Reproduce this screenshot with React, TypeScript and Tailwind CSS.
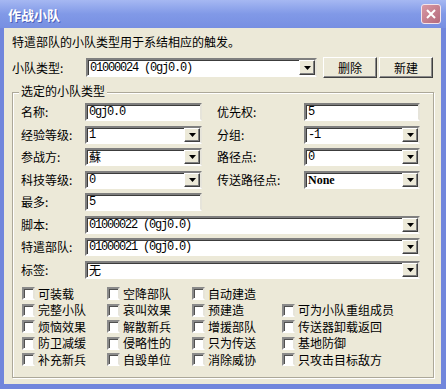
import React from "react";

function Arrow() {
  return (
    <div className="absolute right-0 top-0 bottom-0 w-[16px] bg-[#ece9d8] border border-t-white border-l-white border-b-[#404040] border-r-[#404040] shadow-[inset_-1px_-1px_0_#808080] flex items-center justify-center">
      <svg width="7" height="4" viewBox="0 0 7 4">
        <path d="M0 0 H7 L3.5 4 Z" fill="#000" />
      </svg>
    </div>
  );
}

function Field({
  className,
  value,
  kind = "mono",
  arrow = false,
}: {
  className: string;
  value: string;
  kind?: "mono" | "cjk" | "serif";
  arrow?: boolean;
}) {
  const font =
    kind === "mono"
      ? "font-['Liberation_Mono',monospace] text-[12px] tracking-[-1.2px]"
      : kind === "serif"
      ? "font-['Liberation_Serif',serif] text-[12px] font-semibold"
      : "text-[12px]";
  return (
    <div
      className={`relative bg-white border-2 border-t-[#7f7f7f] border-l-[#7f7f7f] border-b-white border-r-[#e6e4da] shadow-[inset_1px_1px_0_#3c3c3c] flex items-center pl-[2px] ${className}`}
    >
      <span className={`${font} leading-none whitespace-pre`}>{value}</span>
      {arrow && <Arrow />}
    </div>
  );
}

function Btn({ label }: { label: string }) {
  return (
    <div className="w-[54px] h-[21px] bg-[#ece9d8] border border-t-white border-l-white border-b-[#404040] border-r-[#404040] shadow-[inset_-1px_-1px_0_#8a8a8a] flex items-center justify-center text-[12px]">
      {label}
    </div>
  );
}

function Check({ label }: { label: string }) {
  if (!label) return <div />;
  return (
    <div className="flex items-center gap-[3px] h-[16.5px]">
      <div className="w-[13px] h-[13px] shrink-0 bg-white border-2 border-t-[#8a8a8a] border-l-[#8a8a8a] border-b-white border-r-[#e6e4da] shadow-[inset_1px_1px_0_#505050]" />
      <span className="text-[12px] leading-none whitespace-nowrap">{label}</span>
    </div>
  );
}

const checks = [
  "可装载", "空降部队", "自动建造", "",
  "完整小队", "哀叫效果", "预建造", "可为小队重组成员",
  "烦恼效果", "解散新兵", "增援部队", "传送器卸载返回",
  "防卫减缓", "侵略性的", "只为传送", "基地防御",
  "补充新兵", "自毁单位", "消除威协", "只攻击目标敌方",
];

export default function App() {
  return (
    <div className="w-[446px] h-[389px] flex flex-col bg-[#7186dc] font-['Noto_Sans_CJK_SC',sans-serif] text-[12px] text-black overflow-hidden">
      <div className="h-[28px] shrink-0 flex items-center justify-between pl-[8px] pr-[5px] bg-linear-to-b from-[#a6b8f2] via-[#8199e7] to-[#778fe2]">
        <span className="text-white font-bold text-[13px] leading-none [text-shadow:1px_1px_0_#4d5fb8]">作战小队</span>
        <div className="w-[20px] h-[20px] rounded-[3px] border border-[#f3e4ea] bg-linear-to-br from-[#d898a4] to-[#b46a7c] flex items-center justify-center">
          <svg width="10" height="10" viewBox="0 0 10 10">
            <path d="M1 1 L9 9 M9 1 L1 9" stroke="white" strokeWidth="2" />
          </svg>
        </div>
      </div>

      <div className="flex-1 ml-[4px] mr-[5px] mb-[5px] bg-[#ece9d8] flex flex-col pl-[8px] pt-[7px]">
        <div className="h-[14px] leading-[14px] whitespace-nowrap">特遣部队的小队类型用于系结相应的触发。</div>

        <div className="mt-[8px] h-[21px] flex items-center">
          <div className="w-[74px]">小队类型:</div>
          <Field className="w-[231px] h-[19px]" value="01000024 (0gj0.0)" arrow />
          <div className="ml-[6px]">
            <Btn label="删除" />
          </div>
          <div className="ml-[2px]">
            <Btn label="新建" />
          </div>
        </div>

        <div className="relative mt-[14px] w-[422px] h-[286px] border border-[#aca899] shadow-[inset_1px_1px_0_#fff,1px_1px_0_#fff] pl-[8px] pt-[10px]">
          <div className="absolute left-[6px] top-[-9px] px-[2px] bg-[#ece9d8] leading-[14px]">选定的小队类型</div>

          <div className="flex flex-col gap-[4.5px]">
            <div className="flex items-center h-[18px]">
              <div className="w-[64px]">名称:</div>
              <Field className="w-[117px] h-[18px]" value="0gj0.0" />
              <div className="w-[87px] ml-[15px]">优先权:</div>
              <Field className="w-[116px] h-[18px]" value="5" />
            </div>
            <div className="flex items-center h-[18px]">
              <div className="w-[64px]">经验等级:</div>
              <Field className="w-[117px] h-[18px]" value="1" arrow />
              <div className="w-[87px] ml-[15px]">分组:</div>
              <Field className="w-[116px] h-[18px]" value="-1" arrow />
            </div>
            <div className="flex items-center h-[18px]">
              <div className="w-[64px]">参战方:</div>
              <Field className="w-[117px] h-[18px]" value="蘇" kind="cjk" arrow />
              <div className="w-[87px] ml-[15px]">路径点:</div>
              <Field className="w-[116px] h-[18px]" value="0" arrow />
            </div>
            <div className="flex items-center h-[18px]">
              <div className="w-[64px]">科技等级:</div>
              <Field className="w-[117px] h-[18px]" value="0" arrow />
              <div className="w-[87px] ml-[15px]">传送路径点:</div>
              <Field className="w-[116px] h-[18px]" value="None" kind="serif" arrow />
            </div>
            <div className="flex items-center h-[18px]">
              <div className="w-[64px]">最多:</div>
              <Field className="w-[117px] h-[18px]" value="5" />
            </div>
            <div className="flex items-center h-[18px]">
              <div className="w-[64px]">脚本:</div>
              <Field className="w-[335px] h-[18px]" value="01000022 (0gj0.0)" arrow />
            </div>
            <div className="flex items-center h-[18px]">
              <div className="w-[64px]">特遣部队:</div>
              <Field className="w-[335px] h-[18px]" value="01000021 (0gj0.0)" arrow />
            </div>
            <div className="flex items-center h-[18px]">
              <div className="w-[64px]">标签:</div>
              <Field className="w-[335px] h-[18px]" value="无" kind="cjk" arrow />
            </div>
          </div>

          <div className="mt-[7px] ml-[1px] grid grid-cols-[85px_85px_90px_1fr]">
            {checks.map((c, i) => (
              <Check key={i} label={c} />
            ))}
          </div>
        </div>
      </div>
    </div>
  );
}
